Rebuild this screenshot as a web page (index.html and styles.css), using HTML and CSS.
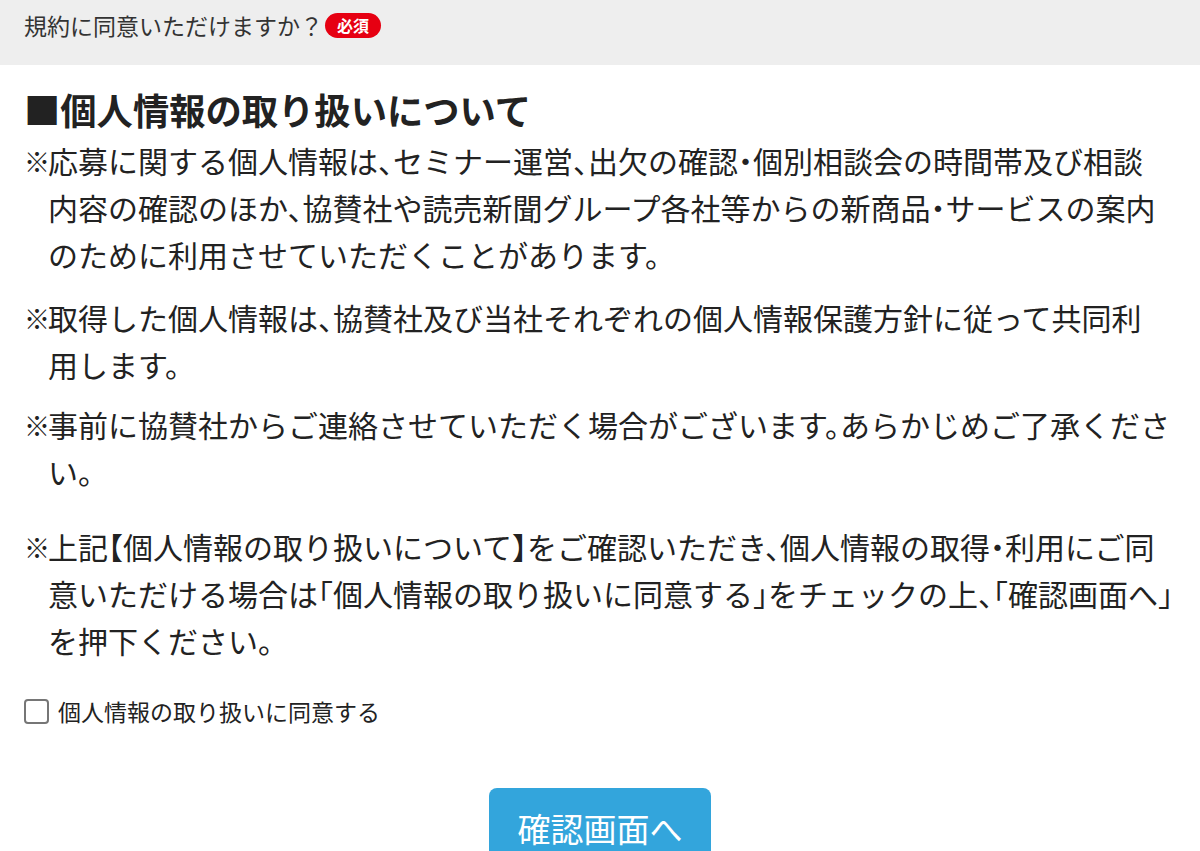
FILE: index.html
```html
<!DOCTYPE html>
<html lang="ja">
<head>
<meta charset="utf-8">
<link rel="stylesheet" href="styles.css">
</head>
<body>
<div class="qhead">
  <span class="qlabel">規約に同意いただけますか？</span><span class="badge">必須</span>
</div>
<div class="content">
  <h2 class="title">■個人情報の取り扱いについて</h2>
  <p class="note"><span class="mark">※</span>応募に関する個人情報は、セミナー運営、出欠の確認・個別相談会の時間帯及び相談<br>内容の確認のほか、協賛社や読売新聞グループ各社等からの新商品・サービスの案内<br>のために利用させていただくことがあります。</p>
  <p class="note n2"><span class="mark">※</span>取得した個人情報は、協賛社及び当社それぞれの個人情報保護方針に従って共同利<br>用します。</p>
  <p class="note"><span class="mark">※</span>事前に協賛社からご連絡させていただく場合がございます。あらかじめご了承くださ<br>い。</p>
  <p class="note last"><span class="mark">※</span>上記【個人情報の取り扱いについて】をご確認いただき、個人情報の取得・利用にご同<br>意いただける場合は「個人情報の取り扱いに同意する」をチェックの上、「確認画面へ」<br>を押下ください。</p>
  <label class="agree"><span class="box"></span><span>個人情報の取り扱いに同意する</span></label>
  <div class="actions"><button class="submit" type="button">確認画面へ</button></div>
</div>
</body>
</html>
```
FILE: styles.css
```css
html, body {
  margin: 0;
  padding: 0;
  background: #ffffff;
}
body {
  font-family: "Noto Sans CJK JP", "Noto Sans", sans-serif;
  color: #222222;
  width: 1200px;
  height: 851px;
  overflow: hidden;
}
.qhead {
  background: #eeeeee;
  height: 65px;
  box-sizing: border-box;
  padding: 9px 24px 0;
  display: flex;
  align-items: flex-start;
}
.qlabel {
  font-size: 23px;
  line-height: 32px;
  color: #333333;
}
.badge {
  margin-left: 2px;
  margin-top: 4px;
  background: #e60012;
  color: #ffffff;
  font-weight: 700;
  font-size: 16px;
  line-height: 25px;
  height: 25px;
  padding: 0 12px;
  border-radius: 13px;
}
.content {
  padding: 0 24px;
}
.title {
  margin: 22px 0 6px;
  font-size: 36.3px;
  line-height: 44px;
  font-weight: 700;
  color: #222222;
}
.note {
  margin: 0 0 16px;
  font-size: 30px;
  line-height: 47px;
  padding-left: 24px;
  text-indent: -24px;
  white-space: nowrap;
  font-feature-settings: "halt";
}
.note.n2 {
  margin-bottom: 13px;
}
.mark {
  font-size: 26px;
  line-height: 1;
  letter-spacing: -2px;
  vertical-align: 1px;
}
.note.last {
  margin-top: 28px;
}
.agree {
  display: flex;
  align-items: center;
  gap: 9px;
  font-size: 23px;
  line-height: 30px;
  color: #222222;
  margin-top: 32px;
}
.box {
  width: 21px;
  height: 21px;
  border: 2px solid #767676;
  border-radius: 4px;
  background: #ffffff;
}
.actions {
  display: flex;
  justify-content: center;
  margin-top: 62px;
}
.submit {
  width: 222px;
  height: 90px;
  border: 0;
  border-radius: 8px;
  background: #33a5dc;
  color: #ffffff;
  font-family: "Noto Sans CJK JP", sans-serif;
  font-size: 33px;
  padding: 16px 0 0;
  display: flex;
  justify-content: center;
  align-items: flex-start;
}
```
